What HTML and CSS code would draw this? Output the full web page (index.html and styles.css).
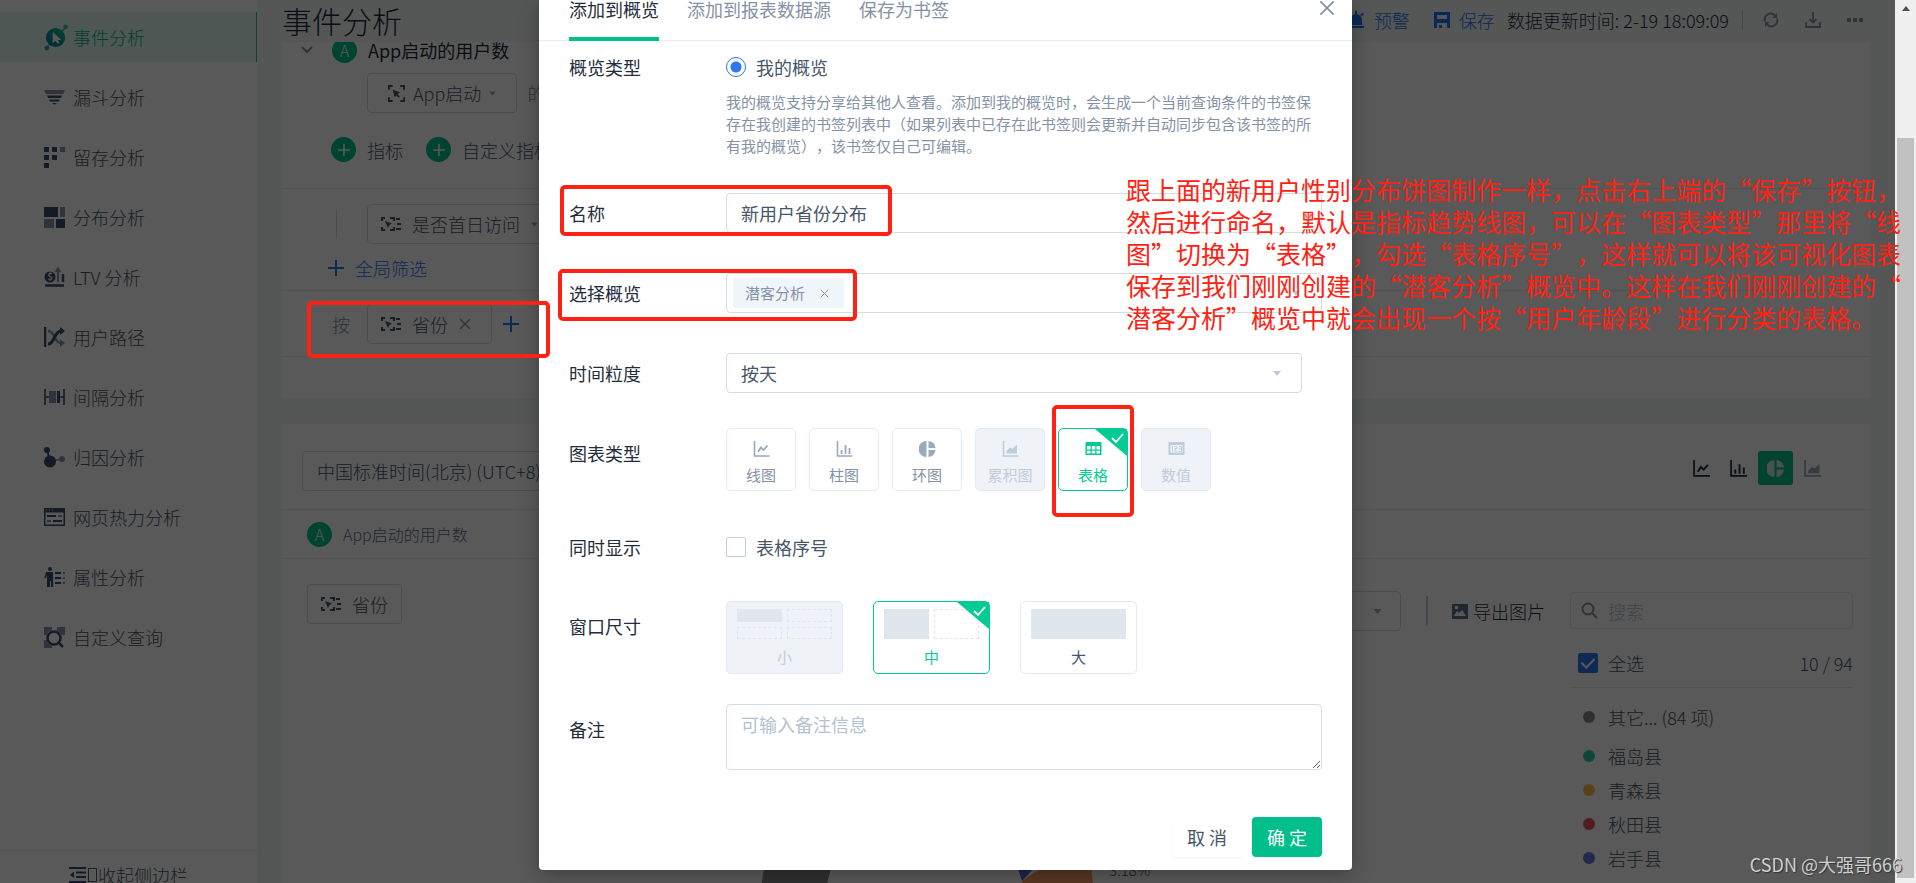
FILE: index.html
```
<!DOCTYPE html>
<html lang="zh-CN">
<head>
  <meta charset="UTF-8" />
  <meta name="viewport" content="width=device-width, initial-scale=1.0"/>
  <title>事件分析</title>
  <link rel="stylesheet" href="styles.css">
</head>
<body>

  <!-- Icon yang dipakai lebih dari sekali -->
  <svg class="sprite" aria-hidden="true">
    <symbol id="i-line" viewBox="0 0 16 16"><path d="M1 0v15h15" fill="none" stroke="currentColor" stroke-width="1.6"/><path d="M4.500 11l3-4.500 2.500 2.500 4-4.500" fill="none" stroke="currentColor" stroke-width="1.8"/></symbol>
    <symbol id="i-bar" viewBox="0 0 16 16"><path d="M1 0v15h15" fill="none" stroke="currentColor" stroke-width="1.6"/><path d="M5 13V9M9 13V4M13 13V7" stroke="currentColor" stroke-width="1.8"/></symbol>
    <symbol id="i-pie" viewBox="0 0 16 16"><path d="M7 0a8 8 0 0 0 0 16zM9 0v7h7a8 8 0 0 0-7-7zM9 9v7a8 8 0 0 0 7-7z" fill="currentColor"/></symbol>
    <symbol id="i-area" viewBox="0 0 16 16"><path d="M1 0v15h15" fill="none" stroke="currentColor" stroke-width="1.6"/><path d="M4 12.500V10l3.500-3.500 2.500 1.500 4.500-4.500v9z" fill="currentColor"/></symbol>
    <symbol id="i-table" viewBox="0 0 16 16"><path d="M0 1h16v13H0zM1.500 5v3.500h3.500V5zM6.300 5v3.500h3.500V5zM11 5v3.500h3.500V5zM1.500 9.700V12.500h3.500V9.700zM6.300 9.700V12.500h3.500V9.700zM11 9.700V12.500h3.500V9.700z" fill="currentColor" fill-rule="evenodd"/></symbol>
    <symbol id="i-number" viewBox="0 0 16 16"><path d="M0 1h16v13H0zM2 4v7.500h12V4z" fill="currentColor" fill-rule="evenodd"/><path d="M4 5v5.500M6 5.500h2.500v2H6.500v2.500h2.500M10.500 5.500H13v5h-2.500M10.500 7.800H13" fill="none" stroke="currentColor"/></symbol>
    <symbol id="i-event" viewBox="0 0 18 18"><path d="M1 5V1h4M13 1h4v4M17 13v4h-4M5 17H1v-4" fill="none" stroke="currentColor" stroke-width="2"/><path d="M5 5l8 3-3 1.500 2.500 3-1 1-3-2.500L7 13z" fill="currentColor"/></symbol>
    <symbol id="i-prop" viewBox="0 0 20 16"><path d="M1 5V2h3M9 2h4v3M13 11v3H9M4 14H1v-3M15 3h4M16 8h4M15 13h5" fill="none" stroke="currentColor" stroke-width="2"/><path d="M4 5l7 2.500L8.500 9l-1.500 3z" fill="currentColor"/></symbol>
    <symbol id="i-plus" viewBox="0 0 16 16"><path d="M8 0v16M0 8h16" stroke="currentColor" stroke-width="2"/></symbol>
    <symbol id="i-close" viewBox="0 0 12 12"><path d="M1 1l10 10M11 1L1 11" stroke="currentColor" stroke-width="1.3"/></symbol>
    <symbol id="i-caret" viewBox="0 0 10 6"><path d="M0 0h10L5 6z" fill="currentColor"/></symbol>
    <symbol id="i-tick" viewBox="0 0 32 27"><path d="M0 0h32v27z" fill="#04cb94"/><path d="M17 9l4 4 7-8" fill="none" stroke="#fff" stroke-width="1.8"/></symbol>
  </svg>

  <div class="app">

    <aside class="sidebar">
      <nav>
        <a href="#" class="nav-item active">
          <svg class="nav-icon big" viewBox="0 0 26 28"><defs><linearGradient id="g" x1="1" y1="0" x2="0" y2="1"><stop offset="0" stop-color="#12c88f"/><stop offset="1" stop-color="#0a6a9c"/></linearGradient></defs><path d="M3 24L23 3" stroke="#3cc6a0" stroke-width="1.500"/><circle cx="12" cy="14" r="10" fill="url(#g)"/><circle cx="22.500" cy="3" r="2.500" fill="#35c895"/><circle cx="3" cy="25" r="2.500" fill="#3a9db0"/><path d="M9 8v12l3-2.500 2 3 2-1-1.500-3h3.500z" fill="#fff"/></svg>
          事件分析</a>
        <a href="#" class="nav-item">
          <svg class="nav-icon" viewBox="0 0 21 21"><path d="M0 3h21l-2 4H2z" fill="#8a93a5"/><path d="M3 8.500h15L17 11H4zM5 12.500h11l-1 2H6zM8 16h5l-2 1.500h-1z" fill="#3c4f6d"/></svg>
          漏斗分析</a>
        <a href="#" class="nav-item">
          <svg class="nav-icon" viewBox="0 0 21 21"><path d="M0 0h5v5H0zM8 0h5v5H8zM0 8h5v5H0zM8 8h5v5H8zM0 16h5v5H0z" fill="#3c4f6d"/><path d="M16 0h5v5h-5z" fill="#8a93a5"/></svg>
          留存分析</a>
        <a href="#" class="nav-item">
          <svg class="nav-icon" viewBox="0 0 21 21"><path d="M0 0h14v10H0zM12 12h9v9h-9z" fill="#3c4f6d"/><path d="M16 0h5v10h-5zM0 12h10v9H0z" fill="#8a93a5"/></svg>
          分布分析</a>
        <a href="#" class="nav-item">
          <svg class="nav-icon" viewBox="0 0 21 21"><circle cx="6" cy="10" r="5.500" fill="#3c4f6d"/><text x="3.500" y="13" class="coin">$</text><path d="M14 15V2M11.500 5L14 1.500 16.500 5" fill="none" stroke="#8a93a5" stroke-width="2"/><path d="M19 15V7M1 18.500h19" stroke="#3c4f6d" stroke-width="2.500"/></svg>
          LTV 分析</a>
        <a href="#" class="nav-item">
          <svg class="nav-icon" viewBox="0 0 21 21"><path d="M1 0v20" stroke="#3c4f6d" stroke-width="2.500"/><path d="M4 4c7 0 6 12 13 12" fill="none" stroke="#8a93a5" stroke-width="2.500"/><path d="M16 12l5 4-5 4z" fill="#8a93a5"/><path d="M4 17c7 0 6-13 13-13" fill="none" stroke="#3c4f6d" stroke-width="3"/><path d="M16 0l5 4-5 4z" fill="#3c4f6d"/></svg>
          用户路径</a>
        <a href="#" class="nav-item">
          <svg class="nav-icon" viewBox="0 0 21 21"><path d="M1 2v16M20 2v16M1 10h4M16 10h4" stroke="#3c4f6d" stroke-width="1.600"/><path d="M5 4h7v12H5z" fill="#8a93a5"/><path d="M13 4h3v12h-3z" fill="#3c4f6d"/></svg>
          间隔分析</a>
        <a href="#" class="nav-item">
          <svg class="nav-icon" viewBox="0 0 21 21"><path d="M3 3l3 11" stroke="#3c4f6d" stroke-width="2"/><path d="M6 14l12-2" stroke="#8a93a5" stroke-width="1.500"/><circle cx="3" cy="3" r="3" fill="#3c4f6d"/><circle cx="6" cy="14.500" r="6" fill="#3c4f6d"/><circle cx="18" cy="12" r="3" fill="#8a93a5"/></svg>
          归因分析</a>
        <a href="#" class="nav-item">
          <svg class="nav-icon" viewBox="0 0 21 21"><path d="M0 1h21v18H0zM1.500 5.500v12h18v-12z" fill="#3c4f6d" fill-rule="evenodd"/><path d="M3 9h9M9 14h9" stroke="#3c4f6d" stroke-width="2"/><path d="M14 9h4M3 14h4" stroke="#8a93a5" stroke-width="2"/><path d="M2 3h1M5 3h1M8 3h1" stroke="#fff"/></svg>
          网页热力分析</a>
        <a href="#" class="nav-item">
          <svg class="nav-icon" viewBox="0 0 21 21"><circle cx="6" cy="2" r="2" fill="#3c4f6d"/><path d="M3 5h6v15H7v-6H6v6H3z" fill="#3c4f6d"/><path d="M3 5l-2 6" stroke="#3c4f6d" stroke-width="1.600"/><path d="M11 6h6M11 11h6M11 16h6" stroke="#3c4f6d" stroke-width="2"/><path d="M19 6h2M19 11h2M19 16h2" stroke="#8a93a5" stroke-width="2"/></svg>
          属性分析</a>
        <a href="#" class="nav-item">
          <svg class="nav-icon" viewBox="0 0 21 21"><path d="M0 0h8v8H0zM13 0h8v8h-8zM0 13h8v8H0z" fill="#8a93a5"/><circle cx="10" cy="11" r="8" fill="#fff"/><circle cx="10" cy="11" r="6.500" fill="none" stroke="#3c4f6d" stroke-width="2.500"/><path d="M14 15l5 5" stroke="#3c4f6d" stroke-width="2.500"/></svg>
          自定义查询</a>
      </nav>
      <button class="collapse">
        <svg width="17" height="16" viewBox="0 0 17 16"><path d="M0 1h17M7 5.500h10M7 10h10M0 15h17" stroke="#3c4f6d" stroke-width="1.800"/><path d="M5 4.500v6.500L1 8z" fill="#3c4f6d"/></svg>
        <i class="tofu"></i>收起侧边栏
      </button>
    </aside>

    <main>
      <header class="page-header">
        <h1>事件分析</h1>
        <div class="header-tools">
          <button class="link"><svg width="18" height="18" viewBox="0 0 18 18"><path d="M3 14V9a6 6 0 0 1 12 0v5zM1 15h16v2H1zM8 0h2v3H8zM1 3l2-1 2 2-2 1zM17 3l-2-1-2 2 2 1z" fill="currentColor"/></svg>预警</button>
          <button class="link save"><svg width="16" height="16" viewBox="0 0 16 16"><path d="M0 0h16v16h-3v-5H3v5H0zM3 3v4h10V3zM5 13h3v3H5z" fill="currentColor" fill-rule="evenodd"/></svg>保存</button>
          <span class="updated">数据更新时间: 2-19 18:09:09</span>
          <button class="tool" aria-label="刷新"><svg width="16" height="16" viewBox="0 0 16 16"><path d="M2 9.500A6 6 0 0 1 12 3.500M14 6.500A6 6 0 0 1 4 12.500" fill="none" stroke="currentColor" stroke-width="1.800"/><path d="M14 1v5H9.500zM2 15v-5h4.500z" fill="currentColor"/></svg></button>
          <button class="tool" aria-label="下载"><svg width="16" height="16" viewBox="0 0 16 16"><path d="M1 10v5h14v-5M8 0v10M4.500 7L8 10.500 11.500 7" fill="none" stroke="currentColor" stroke-width="1.800"/></svg></button>
          <button class="tool" aria-label="更多"><svg width="16" height="16" viewBox="0 0 16 16"><path d="M0 6h4v4H0zM6 6h4v4H6zM12 6h4v4h-4z" fill="currentColor"/></svg></button>
        </div>
      </header>

      <section class="card query">
        <div class="block">
          <div class="row metric">
            <svg class="chevron" width="12" height="8" viewBox="0 0 12 8"><path d="M1 1l5 5 5-5" fill="none" stroke="currentColor" stroke-width="2"/></svg>
            <span class="badge">A</span><strong>App启动的用户数</strong>
          </div>
          <div class="row indent">
            <button class="box event"><svg width="17" height="17"><use href="#i-event"/></svg>App启动<svg class="caret" width="7" height="5"><use href="#i-caret"/></svg></button>
            <span class="muted">的</span>
          </div>
          <div class="row adders">
            <button class="add"><span class="badge"><svg width="12" height="12"><use href="#i-plus"/></svg></span>指标</button>
            <button class="add"><span class="badge"><svg width="12" height="12"><use href="#i-plus"/></svg></span>自定义指标</button>
          </div>
        </div>
        <div class="block filters">
          <div class="row indent tree">
            <button class="box"><svg width="20" height="16"><use href="#i-prop"/></svg>是否首日访问<svg class="caret" width="7" height="5"><use href="#i-caret"/></svg></button>
          </div>
          <button class="link global"><svg width="16" height="16"><use href="#i-plus"/></svg>全局筛选</button>
        </div>
        <div class="block group">
          <div class="row">
            <span class="by">按</span>
            <button class="box"><svg width="20" height="16"><use href="#i-prop"/></svg>省份<svg class="remove" width="12" height="12"><use href="#i-close"/></svg></button>
            <button class="link plus" aria-label="添加分组"><svg width="16" height="16"><use href="#i-plus"/></svg></button>
          </div>
        </div>
      </section>

      <section class="card result">
        <div class="result-head">
          <button class="box">中国标准时间(北京) (UTC+8)</button>
          <div class="switcher">
            <button aria-label="线图"><svg width="17" height="17"><use href="#i-line"/></svg></button>
            <button aria-label="柱图"><svg width="17" height="17"><use href="#i-bar"/></svg></button>
            <button class="on" aria-label="环图"><svg width="17" height="17"><use href="#i-pie"/></svg></button>
            <button disabled aria-label="累积图"><svg width="17" height="17"><use href="#i-area"/></svg></button>
          </div>
        </div>
        <div class="result-metric"><span class="badge">A</span>App启动的用户数</div>
        <div class="result-body">
          <div class="chart-area">
            <div class="chart-bar">
              <button class="box"><svg width="20" height="16"><use href="#i-prop"/></svg>省份</button>
              <div class="chart-tools">
                <button class="box pick" aria-label="选择"><svg class="caret" width="9" height="5"><use href="#i-caret"/></svg></button>
                <button class="export"><svg width="16" height="15" viewBox="0 0 16 15"><path d="M0 0h16v15H0zM2 12h12l-4-6-3 3-2-2zM3 2v3h3V2z" fill="#5f7187" fill-rule="evenodd"/></svg>导出图片</button>
              </div>
            </div>
            <svg class="donut" width="460" height="100" viewBox="0 0 460 100">
              <path d="M75 20l68 10-20 90H60z" fill="#8a8a8a"/>
              <path d="M310 30h40l-10 35-14 15z" fill="#5566dd"/>
              <path d="M326 80l25-17 42-20 6 60h-66z" fill="#fe9a66"/>
              <text x="413" y="75" class="pct">3.18%</text>
              <text x="413" y="96" class="pct">岩手县</text>
            </svg>
          </div>
          <div class="legend">
            <label class="search"><svg width="17" height="17" viewBox="0 0 17 17"><circle cx="7" cy="7" r="5.500" fill="none" stroke="currentColor" stroke-width="2"/><path d="M11 11l5 5" stroke="currentColor" stroke-width="2"/></svg><input type="text" placeholder="搜索"></label>
            <div class="all">
              <label><input type="checkbox" class="check" checked>全选</label>
              <span>10 / 94</span>
            </div>
            <ul>
              <li class="c-grey">其它... (84 项)</li>
              <li class="c-teal">福岛县</li>
              <li class="c-amber">青森县</li>
              <li class="c-red">秋田县</li>
              <li class="c-blue">岩手县</li>
              <li class="c-orange">宫城县</li>
            </ul>
          </div>
        </div>
      </section>
    </main>

    <!-- Dialog simpan -->
    <div class="overlay">
      <form class="modal">
        <div class="modal-tabs">
          <button type="button" class="tab current">添加到概览</button>
          <button type="button" class="tab">添加到报表数据源</button>
          <button type="button" class="tab">保存为书签</button>
          <button type="button" class="modal-close" aria-label="关闭"><svg width="16" height="16"><use href="#i-close"/></svg></button>
        </div>
        <div class="modal-body">
          <div class="field compact">
            <span class="name">概览类型</span>
            <div class="control">
              <label class="option"><input type="radio" class="radio" name="kind" checked>我的概览</label>
              <p class="help">我的概览支持分享给其他人查看。添加到我的概览时，会生成一个当前查询条件的书签保存在我创建的书签列表中（如果列表中已存在此书签则会更新并自动同步包含该书签的所有我的概览），该书签仅自己可编辑。</p>
            </div>
          </div>
          <div class="field title">
            <label class="name" for="title">名称</label>
            <div class="control"><input type="text" id="title" class="text" value="新用户省份分布"></div>
          </div>
          <div class="field">
            <span class="name">选择概览</span>
            <div class="control">
              <div class="text tags">
                <span class="tag">潜客分析<button type="button" aria-label="移除"><svg width="9" height="9"><use href="#i-close"/></svg></button></span>
                <svg class="caret" width="10" height="5"><use href="#i-caret"/></svg>
              </div>
            </div>
          </div>
          <div class="field">
            <label class="name" for="grain">时间粒度</label>
            <div class="control select">
              <select id="grain" class="text"><option>按天</option></select>
              <svg class="caret" width="10" height="5"><use href="#i-caret"/></svg>
            </div>
          </div>
          <div class="field charts">
            <span class="name">图表类型</span>
            <div class="control chart-types">
              <label class="tile"><input type="radio" name="chart"><svg width="17" height="16"><use href="#i-line"/></svg>线图</label>
              <label class="tile"><input type="radio" name="chart"><svg width="17" height="16"><use href="#i-bar"/></svg>柱图</label>
              <label class="tile"><input type="radio" name="chart"><svg width="17" height="16"><use href="#i-pie"/></svg>环图</label>
              <label class="tile off"><input type="radio" name="chart" disabled><svg width="17" height="16"><use href="#i-area"/></svg>累积图</label>
              <label class="tile picked"><input type="radio" name="chart" checked><svg width="17" height="16"><use href="#i-table"/></svg>表格<svg class="corner" width="32" height="27"><use href="#i-tick"/></svg></label>
              <label class="tile off"><input type="radio" name="chart" disabled><svg width="17" height="16"><use href="#i-number"/></svg>数值</label>
            </div>
          </div>
          <div class="field compact show">
            <span class="name">同时显示</span>
            <div class="control"><label class="option"><input type="checkbox" class="check">表格序号</label></div>
          </div>
          <div class="field sizes">
            <span class="name">窗口尺寸</span>
            <div class="control size-types">
              <label class="tile off"><input type="radio" name="size" disabled><span class="preview small"><i class="full"></i><i></i><i></i><i></i></span>小</label>
              <label class="tile picked"><input type="radio" name="size" checked><span class="preview half"><i class="full"></i><i></i></span>中<svg class="corner" width="32" height="27"><use href="#i-tick"/></svg></label>
              <label class="tile dark"><input type="radio" name="size"><span class="preview"><i class="full"></i></span>大</label>
            </div>
          </div>
          <div class="field note">
            <label class="name" for="note">备注</label>
            <div class="control"><textarea id="note" class="text" placeholder="可输入备注信息"></textarea></div>
          </div>
          <div class="actions">
            <button type="button" class="cancel">取 消</button>
            <button type="button" class="ok">确 定</button>
          </div>
        </div>
      </form>
    </div>
  </div>

  <div class="scrollbar"><span class="arrow"></span><span class="thumb"></span></div>

  <!-- Catatan merah di atas halaman -->
  <div class="mark mark-group"></div>
  <div class="mark mark-title"></div>
  <div class="mark mark-board"></div>
  <div class="mark mark-table"></div>
  <p class="note-text">跟上面的新用户性别分布饼图制作一样，点击右上端的“保存”按钮，<br>然后进行命名，默认是指标趋势线图，可以在“图表类型”那里将“线<br>图”切换为“表格”，勾选“表格序号”，这样就可以将该可视化图表<br>保存到我们刚刚创建的“潜客分析”概览中。这样在我们刚刚创建的“<br>潜客分析”概览中就会出现一个按“用户年龄段”进行分类的表格。</p>
  <div class="watermark">CSDN @大强哥666</div>

</body>
</html>
```
FILE: styles.css
```
* {
  box-sizing: border-box;
}

body {
  margin: 0;
  display: flex;
  height: 100vh;
  overflow: hidden;
  position: relative;
  font-family: "Noto Sans CJK SC", sans-serif;
  font-size: 18px;
  font-weight: 400;
  line-height: 20px;
  color: #475669;
  text-spacing-trim: space-all;
}

button, input, select, textarea {
  font: inherit;
  color: inherit;
  margin: 0;
}

button {
  background: none;
  border: none;
  padding: 0;
  cursor: pointer;
  white-space: nowrap;
}

svg {
  flex: none;
  display: block;
}

.sprite {
  position: absolute;
  width: 0;
  height: 0;
}

.app {
  flex: 1;
  min-width: 0;
  display: flex;
  position: relative;
  z-index: 0;
  overflow: hidden;
  font-weight: 300;
  background: #f0f8f6;
}

/* Sidebar */
.sidebar {
  width: 257px;
  flex: none;
  display: flex;
  flex-direction: column;
  justify-content: space-between;
  background: #fff;
  padding-top: 12px;
}

.nav-item {
  display: flex;
  align-items: center;
  gap: 8px;
  height: 50px;
  margin-bottom: 10px;
  padding-left: 44px;
  color: #475669;
  text-decoration: none;
}

.nav-item.active {
  gap: 4px;
  color: #04b283;
  background: #e3f9f2;
  border-right: 1px solid #04cb94;
}

.nav-icon {
  width: 21px;
  height: 21px;
}

.nav-icon.big {
  width: 25px;
  height: 27px;
}

.coin {
  font-size: 9px;
  font-weight: 700;
  fill: #fff;
}

.collapse {
  display: flex;
  align-items: center;
  height: 33px;
  padding: 16px 0 0 69px;
  border-top: 1px solid #e9eef2;
}

.tofu {
  width: 9px;
  height: 14px;
  margin: 0 1px 0 2px;
  border: 1px solid #475669;
}

/* Header */
main {
  flex: 1;
  min-width: 0;
  padding: 0 25px;
}

.page-header {
  display: flex;
  justify-content: space-between;
  align-items: center;
  height: 42px;
  position: relative;
  z-index: 1;
  background: #f0f8f6;
}

h1 {
  margin: 0;
  padding-bottom: 3px;
  font-size: 30px;
  font-weight: 300;
  line-height: 38px;
  color: #1f2d3d;
}

.header-tools {
  display: flex;
  align-items: center;
  padding-bottom: 2px;
  color: #1f2d3d;
}

.link {
  display: flex;
  align-items: center;
  gap: 9px;
  color: #1f75f0;
}

.save {
  margin: 0 12px 0 24px;
}

.updated {
  padding-right: 13px;
  border-right: 1px solid #c0ccda;
  white-space: nowrap;
}

.tool {
  margin-left: 26px;
  color: #8492a6;
}

.tool:nth-of-type(3) {
  margin-left: 20px;
}

.tool:last-child {
  margin-right: 7px;
}

/* Query */
.card {
  background: #fff;
}

.query {
  margin-top: -10px;
  padding-bottom: 42px;
}

.block {
  border-bottom: 1px solid #e5eaf0;
  padding-bottom: 26px;
}

.row {
  display: flex;
  align-items: center;
  white-space: nowrap;
}

.metric {
  height: 36px;
  padding-left: 19px;
  color: #1f2d3d;
}

.metric strong {
  font-weight: 400;
}

.chevron {
  margin-right: 19px;
  color: #8492a6;
}

.badge {
  display: flex;
  align-items: center;
  justify-content: center;
  flex: none;
  width: 25px;
  height: 25px;
  margin-right: 11px;
  border-radius: 50%;
  background: #00bf8a;
  color: #fff;
  font-size: 16px;
}

.indent {
  padding-left: 85px;
}

.metric + .indent {
  margin-top: 5px;
}

.box {
  display: flex;
  align-items: center;
  gap: 11px;
  height: 40px;
  padding: 0 13px;
  border: 1px solid #d3dce6;
  border-radius: 4px;
}

.event {
  gap: 8px;
  padding: 0 20px;
}

.muted {
  margin-left: 10px;
  color: #8492a6;
}

.adders {
  margin-top: 24px;
  padding-left: 49px;
  gap: 23px;
}

.add {
  display: flex;
  align-items: center;
}

.filters {
  padding: 15px 0 12px;
}

.tree::before {
  content: "";
  width: 1px;
  height: 30px;
  margin: 0 30px 0 -31px;
  background: #d3dce6;
}

.caret {
  color: #99a9bf;
}

.global {
  margin: 14px 0 0 46px;
  gap: 11px;
}

.group {
  padding: 13px 0 12px;
}

.by {
  width: 35px;
  margin-left: 50px;
  color: #8492a6;
}

.remove {
  margin-right: 7px;
  color: #8492a6;
}

.plus {
  margin-left: 11px;
}

/* Result */
.result {
  margin-top: 25px;
  min-height: 100vh;
}

.result-head {
  display: flex;
  justify-content: space-between;
  padding: 27px 40px 18px 20px;
  border-bottom: 1px solid #e5eaf0;
}

.result-head .box {
  padding: 0 14px;
}

.switcher {
  display: flex;
  gap: 2px;
}

.switcher button {
  display: flex;
  align-items: center;
  justify-content: center;
  width: 35px;
  height: 34px;
  color: #1f2d3d;
}

.switcher .on {
  border-radius: 3px;
  background: #00bf8a;
  color: #d5e4df;
}

.switcher button:disabled {
  color: #99a9bf;
}

.result-metric {
  display: flex;
  align-items: center;
  height: 49px;
  padding-left: 25px;
  border-bottom: 1px solid #e5eaf0;
  font-size: 16px;
  color: #5e6d82;
}

.result-body {
  display: flex;
  gap: 25px;
  padding: 25px 17px 0 25px;
}

.chart-area {
  flex: 1;
  min-width: 0;
}

.chart-bar {
  display: flex;
  justify-content: space-between;
}

.chart-tools {
  display: flex;
  align-items: center;
  margin-top: 7px;
}

.pick {
  width: 140px;
  padding: 0 18px;
  justify-content: flex-end;
}

.export {
  display: flex;
  align-items: center;
  gap: 5px;
  height: 30px;
  margin-left: 25px;
  padding-left: 24px;
  border-left: 2px solid #c0ccda;
  color: #1f2d3d;
}

.donut {
  margin: 170px auto 0;
}

.pct {
  font-size: 15px;
  fill: #475669;
}

.legend {
  width: 283px;
  flex: none;
  padding-top: 8px;
}

.search {
  display: flex;
  align-items: center;
  gap: 10px;
  height: 37px;
  padding: 0 10px;
  border: 1px solid #e5e9f2;
  border-radius: 4px;
  color: #8492a6;
}

.search input {
  flex: 1;
  min-width: 0;
  border: none;
  outline: none;
  background: none;
  padding: 0;
}

::placeholder {
  color: #b4c2d3;
  opacity: 1;
}

.all {
  display: flex;
  justify-content: space-between;
  padding: 24px 0 14px 8px;
  border-bottom: 1px solid #e5eaf0;
}

.all label, .option {
  display: flex;
  align-items: center;
  gap: 10px;
}

.legend ul {
  list-style: none;
  margin: 12px 0 0;
  padding: 0;
}

.legend li {
  display: flex;
  align-items: center;
  gap: 13px;
  height: 34px;
  padding-left: 13px;
}

.legend li:first-child {
  margin-bottom: 5px;
}

.legend li::before {
  content: "";
  width: 12px;
  height: 12px;
  border-radius: 50%;
  background: var(--dot);
}

.c-grey { --dot: #8a8a8a; }
.c-teal { --dot: #2ec7a9; }
.c-amber { --dot: #ffb84d; }
.c-red { --dot: #f0525a; }
.c-blue { --dot: #6673e0; }
.c-orange { --dot: #fe9a66; }

/* Checkbox & radio */
.check, .radio {
  appearance: none;
  flex: none;
  width: 20px;
  height: 20px;
  border: 1px solid #c0ccda;
  border-radius: 2px;
  background: #fff;
}

.check:checked {
  border-color: #2d77f4;
  background: #2d77f4;
}

.check:checked::before {
  content: "";
  display: block;
  width: 6px;
  height: 11px;
  margin: 1px auto;
  border: solid #fff;
  border-width: 0 2px 2px 0;
  transform: rotate(45deg);
}

.radio {
  border-radius: 50%;
  border-color: #2d77f4;
}

.radio:checked {
  background: radial-gradient(circle, #2d77f4 5px, #fff 6px);
}

/* Modal */
.overlay {
  position: absolute;
  inset: 0;
  z-index: 2;
  padding: 0 4px 14px 0;
  font-weight: 400;
  background: rgba(0, 0, 0, 0.65);
}

.modal {
  max-width: 813px;
  margin: 0 auto;
  background: #fff;
  border-radius: 0 0 4px 4px;
  box-shadow: 0 4px 20px rgba(0, 0, 0, 0.3);
}

.modal-tabs {
  display: flex;
  align-items: flex-start;
  gap: 28px;
  padding: 0 17px 0 30px;
  border-bottom: 1px solid #e5edf5;
}

.tab {
  height: 41px;
  margin-bottom: -1px;
  padding-bottom: 19px;
  border-bottom: 4px solid transparent;
  line-height: 18px;
  color: #8492a6;
}

.tab.current {
  border-color: #00bf8a;
  color: #1f2d3d;
}

.modal-close {
  margin-left: auto;
  color: #8492a6;
}

.modal-body {
  padding: 16px 30px 13px;
}

.field {
  display: flex;
  margin-top: 40px;
}

.field.compact {
  margin-top: 0;
}

.field.title,
.field.charts {
  margin-top: 35px;
}

.field.show {
  margin-top: 46px;
}

.field.sizes {
  margin-top: 44px;
}

.field.note {
  margin-top: 30px;
}

.name {
  width: 157px;
  flex: none;
  line-height: 40px;
  color: #1f2d3d;
}

.compact .name {
  line-height: 20px;
}

.charts .name,
.sizes .name,
.note .name {
  line-height: 50px;
}

.control {
  flex: 1;
  min-width: 0;
}

.help {
  margin: 14px 0 0;
  font-size: 15px;
  line-height: 22px;
  color: #8492a6;
}

.text {
  display: block;
  width: 100%;
  height: 40px;
  padding: 0 14px;
  border: 1px solid #d3dce6;
  border-radius: 4px;
  background: #fff;
  outline: none;
}

.field.title {
  margin-top: 36px;
}

.tags {
  display: flex;
  align-items: center;
  justify-content: space-between;
  padding: 0 20px 0 6px;
}

.tag {
  display: flex;
  align-items: center;
  gap: 15px;
  height: 30px;
  padding: 0 15px 0 12px;
  border-radius: 3px;
  background: #eff5f8;
  font-size: 15px;
  color: #8492a6;
}

.select {
  position: relative;
  margin-right: 20px;
}

.select select {
  appearance: none;
}

.select .caret {
  position: absolute;
  right: 20px;
  top: 18px;
}

.modal .caret {
  color: #c0ccda;
}

.chart-types {
  display: flex;
  gap: 13px;
}

.tile {
  display: flex;
  flex-direction: column;
  align-items: center;
  position: relative;
  border: 1px solid #e0e9f5;
  border-radius: 5px;
  font-size: 15px;
  color: #8492a6;
}

.tile > svg {
  color: #99a9bf;
}

.tile input {
  position: absolute;
  opacity: 0;
}

.chart-types .tile {
  width: 70px;
  height: 63px;
  gap: 8px;
  padding-top: 12px;
}

.tile.off,
.tile.off > svg {
  background: #eff2f7;
  color: #c0ccda;
}

.tile.picked,
.tile.picked > svg {
  border-color: #04cb94;
  color: #04cb94;
}

.tile.dark {
  color: #475669;
}

.corner {
  position: absolute;
  top: 0;
  right: 0;
}

.size-types {
  display: flex;
  gap: 30px;
}

.size-types .tile {
  width: 117px;
  height: 73px;
  padding: 7px 10px 0;
  gap: 8px;
}

.preview {
  display: grid;
  gap: 5px;
  width: 100%;
  height: 30px;
}

.preview.half,
.preview.small {
  grid-template-columns: 1fr 1fr;
}

.preview i {
  border: 1px dashed #dfe5ec;
}

.preview .full {
  border: none;
  background: #dfe6ee;
}

textarea.text {
  height: 66px;
  padding: 9px 14px;
}

.actions {
  display: flex;
  justify-content: flex-end;
  gap: 10px;
  margin-top: 47px;
}

.actions button {
  width: 70px;
  height: 40px;
  border-radius: 4px;
  box-shadow: 0 2px 2px rgba(0, 0, 0, 0.03);
}

.actions .ok {
  background: #00bf8a;
  color: #fff;
}

/* Scrollbar */
.scrollbar {
  display: flex;
  flex-direction: column;
  width: 21px;
  flex: none;
  padding: 6px 2px 5px;
  background: #f0f0f0;
}

.arrow {
  margin: 0 auto 127px;
  border: solid transparent;
  border-width: 0 4px 5px;
  border-bottom-color: #505050;
}

.thumb {
  flex: 1;
  background: #c1c1c1;
}

/* Annotations */
.mark {
  position: absolute;
  border: 4px solid #ff2213;
  border-radius: 5px;
}

.mark-group {
  left: 307px;
  top: 301px;
  width: 243px;
  height: 57px;
}

.mark-title {
  left: 560px;
  top: 185px;
  width: 332px;
  height: 51px;
}

.mark-board {
  left: 558px;
  top: 269px;
  width: 299px;
  height: 52px;
}

.mark-table {
  left: 1052px;
  top: 405px;
  width: 82px;
  height: 112px;
}

.note-text {
  position: absolute;
  left: 1126px;
  top: 173px;
  margin: 0;
  font-size: 25px;
  line-height: 32px;
  white-space: nowrap;
  color: #ff2213;
}

.watermark {
  position: absolute;
  right: 14px;
  bottom: 9px;
  font-size: 18px;
  white-space: nowrap;
  color: #d0d0d0;
  text-shadow: 1px 1px 1px #333;
}
```
